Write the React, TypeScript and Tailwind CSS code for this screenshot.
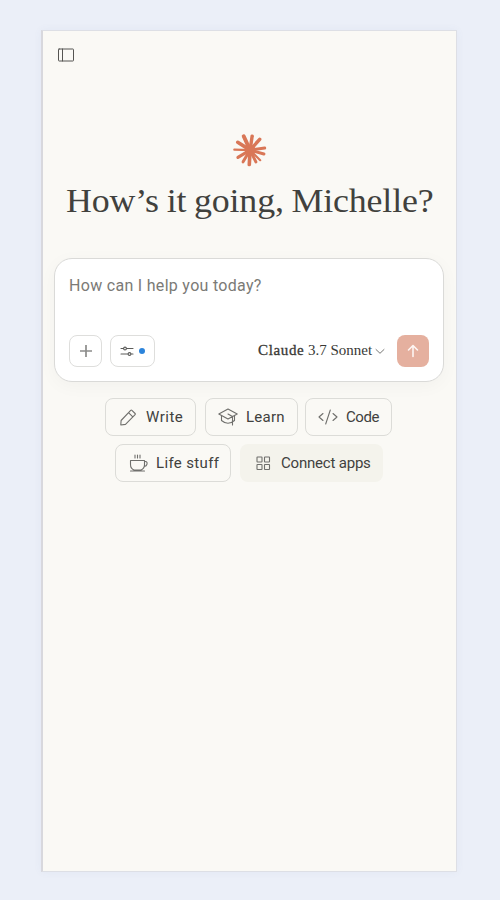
import type { ReactNode } from "react";

const stroke = {
  fill: "none",
  stroke: "currentColor",
  strokeLinecap: "round" as const,
  strokeLinejoin: "round" as const,
};

function Starburst() {
  const rays = [
    [10.4, 3.2, 3.8], [18.6, 3, 3.3], [25.9, 6.2, 3.4], [30.8, 14.6, 2.8],
    [30, 20.4, 2.9], [26.4, 26.4, 2.1], [22.2, 28, 2.9], [15.8, 30.6, 3.5],
    [9.8, 28, 2.9], [4.8, 23.6, 3.1], [1.3, 16.2, 2.2], [4.6, 9, 3.5],
  ];
  return (
    <svg className="h-[34px] w-[34px] text-[#d97757]" viewBox="0 0 33 33">
      {rays.map(([x, y, w]) => (
        <path key={`${x}`} d={`M16.6 16.6L${x} ${y}`} {...stroke} strokeWidth={w} />
      ))}
      <circle cx="16.6" cy="16.6" r="5.2" fill="currentColor" />
    </svg>
  );
}

function Chip({ className, icon, label, text }: { className: string; icon: ReactNode; label: string; text: string }) {
  return (
    <button className={`flex h-[38px] shrink-0 items-center rounded-lg text-[15px] leading-5 text-[#41413e] ${className}`}>
      {icon}
      <span className={`whitespace-nowrap ${text}`}>{label}</span>
    </button>
  );
}

export default function App() {
  return (
    <div className="h-[900px] w-[500px] bg-[#ebeff8] pt-[30px] pl-[41px] font-['Roboto','Liberation_Sans',sans-serif]">
      <main className="flex h-[842px] w-[416px] flex-col border border-l-2 border-[#dddfe5] border-l-[#d8d8dd] bg-[#faf9f5] shadow-[0_0_8px_rgba(90,110,150,0.06)]">
        <header className="h-[102px] pt-[14px] pl-[14px]">
          <svg className="h-[18px] w-[18px] text-[#555552]" viewBox="0 0 18 18" {...stroke}>
            <rect x="1.5" y="4" width="15" height="12" rx="0.6" />
            <path d="M5.5 4v12" />
          </svg>
        </header>
        <div className="flex justify-center">
          <Starburst />
        </div>
        <h1 className="mt-[10px] ml-[23px] h-[48px] w-[370px] origin-left scale-x-[1.055] whitespace-nowrap font-['Liberation_Serif',serif] text-[34px] leading-[48px] tracking-[-0.15px] [word-spacing:-1px] text-[#41413d]">
          How’s it going, Michelle?
        </h1>
        <section className="mt-[33px] ml-[11px] flex h-[124px] w-[390px] flex-col rounded-[18px] border border-[#dadad8] bg-white px-[14px] pb-[14px] shadow-[0_4px_18px_rgba(0,0,0,0.035)]">
          <p className="mt-[15px] whitespace-nowrap text-[16px] leading-6 tracking-[0.3px] text-[#7b7a76]">How can I help you today?</p>
          <div className="mt-auto flex items-center">
            <button className="flex h-8 w-[33px] items-center justify-center rounded-lg border border-[#dededc] text-[#8c8c8a]">
              <svg className="size-[14px]" viewBox="0 0 14 14" fill="none" stroke="currentColor" strokeWidth="1.7">
                <path d="M7 1v12M1 7h12" />
              </svg>
            </button>
            <button className="ml-2 flex h-8 w-[45px] items-center gap-[5px] rounded-lg border border-[#dededc] pl-[9px] text-[#5c5c5a]">
              <svg className="h-[12px] w-[14px]" viewBox="0 0 14 12" {...stroke} strokeWidth="1.1">
                <path d="M1 3.5h2.5M6.5 3.5H13M1 9h7M11 9h2" />
                <circle cx="5" cy="3.5" r="1.4" />
                <circle cx="9.5" cy="9" r="1.4" />
              </svg>
              <span className="size-[6px] rounded-full bg-[#2c84db]" />
            </button>
            <div className="ml-auto flex items-center pb-[2px] font-['Liberation_Serif',serif] text-[15px] leading-5 text-[#393936]">
              <span className="w-[50px] whitespace-nowrap tracking-[0.65px] [-webkit-text-stroke:0.3px_#393936]">Claude</span>
              <span className="w-[65px] whitespace-nowrap">3.7 Sonnet</span>
              <svg className="ml-[2px] h-2 w-[10px] text-[#777774]" viewBox="0 0 10 8" {...stroke}>
                <path d="M1 3.5l4 3.8 4-3.8" />
              </svg>
            </div>
            <button className="ml-[12px] flex size-8 items-center justify-center rounded-lg bg-[#e5b09f] text-[#fdf6f3]">
              <svg className="h-[14px] w-3" viewBox="0 0 12 14" {...stroke} strokeWidth="1.6">
                <path d="M6 12.5V1.5M1.5 6L6 1.5 10.5 6" />
              </svg>
            </button>
          </div>
        </section>
        <div className="mt-4 ml-[62px] flex">
          <Chip className="w-[91px] border border-[#dcdcd8] pl-[13px]" label="Write" text="ml-[9px] tracking-[0.5px]" icon={
            <svg className="h-[19px] w-[18px] text-[#6f6f6c]" viewBox="0 0 18 19" {...stroke} strokeWidth="1.1">
              <path d="M1.8 17l.3-4.5L11.7 2.3q.6-.6 1.2 0l3.2 3.2q.6.6 0 1.2L6.5 16.4z M9.5 4.6l4.3 4.3" />
            </svg>
          } />
          <Chip className="ml-[9px] w-[93px] border border-[#dcdcd8] pl-[12px]" label="Learn" text="ml-[8px] tracking-[0.25px]" icon={
            <svg className="h-[20px] w-[20px] text-[#6f6f6c]" viewBox="0 0 20 20" {...stroke} strokeWidth="1.1">
              <path d="M.8 7L10 2l9.2 5L10 12zM3.5 9v4.5q6.5 5.5 13 0V9M10 7l4.5 2.5V18" />
            </svg>
          } />
          <Chip className="ml-[7px] w-[87px] border border-[#dcdcd8] pl-[12px]" label="Code" text="ml-[8px] tracking-[-0.4px]" icon={
            <svg className="h-[18px] w-[20px] text-[#6f6f6c]" viewBox="0 0 20 18" {...stroke} strokeWidth="1.1">
              <path d="M5 5.5L1 9l4 3.5M15 5.5l4 3.5-4 3.5M12.3 2l-4.6 14" />
            </svg>
          } />
        </div>
        <div className="mt-2 ml-[72px] flex">
          <Chip className="w-[116px] border border-[#dcdcd8] pl-[13px]" label="Life stuff" text="ml-[8px] tracking-[0.35px]" icon={
            <svg className="h-[19px] w-[19px] text-[#6f6f6c]" viewBox="0 0 19 19" {...stroke} strokeWidth="1.1">
              <path d="M1.5 6.5h14v4q0 4-3.5 5.5H5q-3.5-1.5-3.5-5.5zM15.5 7.5h1q2 0 1.5 2.7-.4 2-2.7 2.3M1.5 17h14M6 1v3M8.5 1v3M11 1v3" />
            </svg>
          } />
          <Chip className="ml-[9px] w-[143px] bg-[#f4f3ec] pl-[16px]" label="Connect apps" text="ml-[10px] tracking-[-0.2px]" icon={
            <svg className="size-[15px] text-[#6f6f6c]" viewBox="0 0 15 15" {...stroke} strokeWidth="1.1">
              <rect x="1" y="1" width="5" height="5" rx=".5" />
              <rect x="8.5" y="1" width="5" height="5" rx=".5" />
              <rect x="1" y="8.5" width="5" height="5" rx=".5" />
              <rect x="8.5" y="8.5" width="5" height="5" rx=".5" />
            </svg>
          } />
        </div>
      </main>
    </div>
  );
}
